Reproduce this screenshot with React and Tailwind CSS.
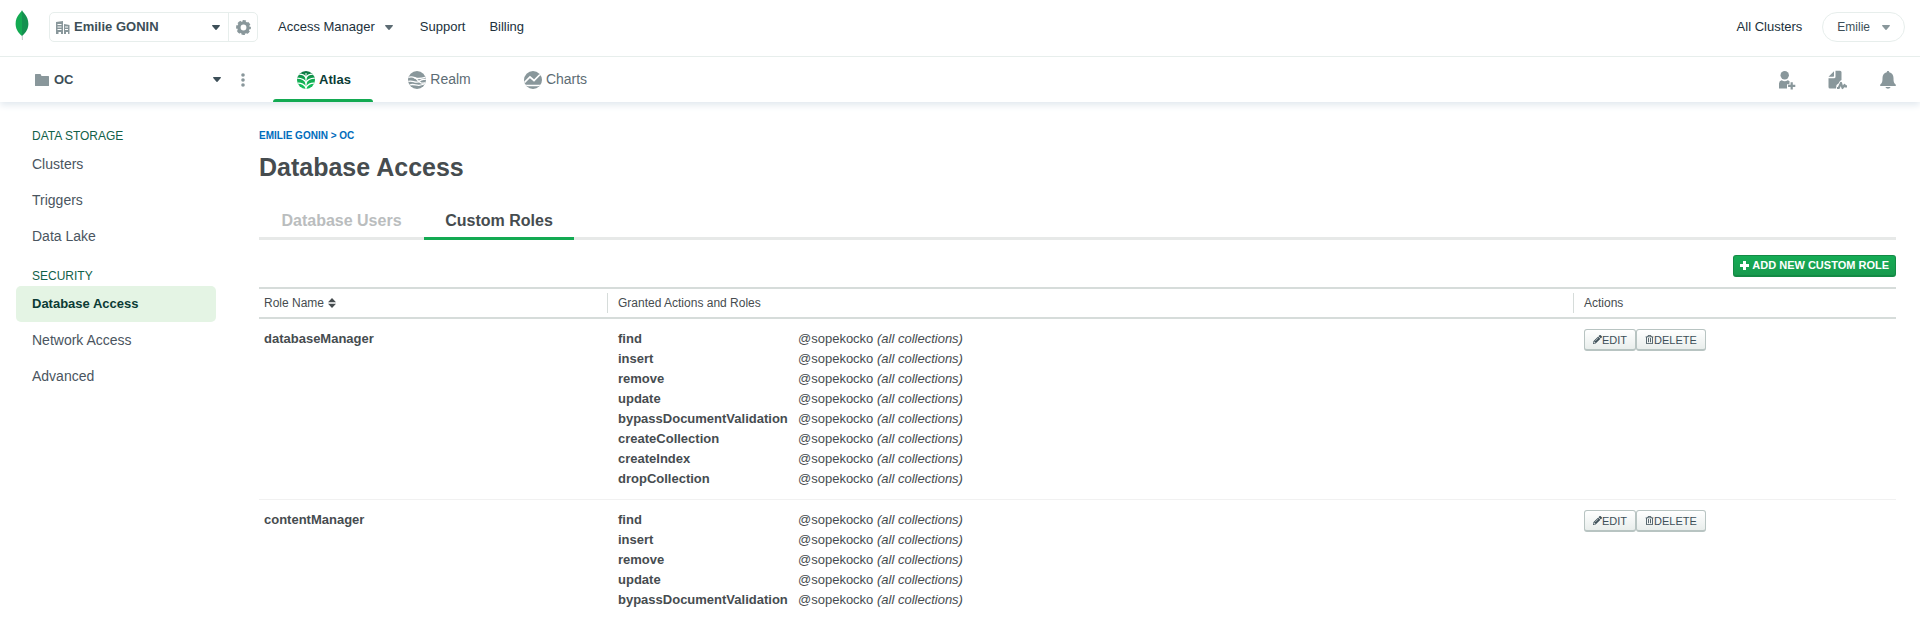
import { FaPencilAlt, FaRegTrashAlt } from "react-icons/fa";

const gray = "#89979b";

function Caret({ className = "" }) {
  return (
    <svg viewBox="0 0 8 5" className={`h-[5px] w-2 shrink-0 ${className}`} fill="currentColor" aria-hidden="true">
      <path d="M0.6 0h6.8c.5 0 .7.5.4.9L4.500 4.700c-.3.4-.7.4-1 0L.2.9C-.1.5.1 0 .6 0z" />
    </svg>
  );
}

function Leaf() {
  return (
    <svg viewBox="0 0 14 30" className="h-[30px] w-[14px]" aria-hidden="true">
      <path d="M6.700 24h.9l.2 6h-.9z" fill="#b8c4c2" />
      <path d="M7 0C6.600 2.500.6 5.500.6 14c0 6.500 4.700 10.500 6.400 12z" fill="#13aa52" />
      <path d="M7 0c.4 2.500 6.400 5.500 6.400 14 0 6.500-4.700 10.500-6.400 12z" fill="#149150" />
    </svg>
  );
}

function Building() {
  return (
    <svg viewBox="0 0 14 13" className="h-[13px] w-[14px] shrink-0" aria-hidden="true">
      <path
        fill={gray}
        fillRule="evenodd"
        d="M0 1l7-1v13H5v-2H2.500v2H0zM1.500 3v1h4V3zM1.500 5.500v1h4v-1zM1.500 8v1h4V8zM8 3l5.500 1v9H12v-2h-2v2H8zM9 5.500v1h3v-1zM9 8v1h3V8z"
      />
    </svg>
  );
}

function Gear() {
  return (
    <svg viewBox="0 0 16 16" className="size-[15px]" fill="none" aria-hidden="true">
      <circle cx="8" cy="8" r="4.900" stroke={gray} strokeWidth="3.600" />
      <circle cx="8" cy="8" r="6.900" stroke={gray} strokeWidth="2" strokeDasharray="3.600 1.820" strokeDashoffset="1.800" />
    </svg>
  );
}

function Folder() {
  return (
    <svg viewBox="0 0 14 12" className="h-3 w-[14px] shrink-0" fill={gray} aria-hidden="true">
      <path d="M.6 0H5.500l1 2h6.900a.6.6 0 0 1 .6.6v8.800a.6.6 0 0 1-.6.6H.6a.6.6 0 0 1-.6-.6V.6A.6.6 0 0 1 .6 0z" />
    </svg>
  );
}

function AtlasIcon() {
  return (
    <svg viewBox="0 0 18 18" className="size-[18px]" aria-hidden="true">
      <defs>
        <clipPath id="atlas-disc"><circle cx="9" cy="9" r="9" /></clipPath>
        <linearGradient id="atlas-fill" x1="0" y1="0" x2="0" y2="1">
          <stop offset="0" stopColor="#0b6d40" />
          <stop offset=".45" stopColor="#13aa52" />
          <stop offset="1" stopColor="#13c45c" />
        </linearGradient>
      </defs>
      <g clipPath="url(#atlas-disc)">
        <rect width="18" height="18" fill="url(#atlas-fill)" />
        <g fill="none" stroke="#fff" strokeWidth="1.300">
          <path d="M9 2v16" strokeWidth="1" />
          <path d="M2 3.200c3 0 6 1.300 7 3.800 1-2.500 4-3.800 7-3.800" />
          <path d="M-.5 7.200C4 7.200 8 9 9 12c1-3 5-4.800 9.500-4.800" />
          <path d="M0 12.200c4-.5 8 1.500 9 4.500 1-3 5-5 9-4.500" />
        </g>
      </g>
    </svg>
  );
}

function RealmIcon() {
  return (
    <svg viewBox="0 0 18 18" className="size-[18px]" aria-hidden="true">
      <defs><clipPath id="realm-disc"><circle cx="9" cy="9" r="9" /></clipPath></defs>
      <g clipPath="url(#realm-disc)">
        <rect width="18" height="18" fill={gray} />
        <g fill="none" stroke="#fff" strokeWidth="1.300">
          <path d="M0 6.500c3-1.200 5-.6 7 .3s6 1 11-.8" />
          <path d="M0 10.500c3-1.200 5 0 7 .5s4-.2 5-1.300c1.500-1.400 4-1 6-1.700" />
          <path d="M2 14c3-1.500 6 .5 9 .3s4-1.300 7-1.600" />
          <path d="M6 6.500c4 1 3 4 7 5.300 2 .5 3 .2 5 0" />
        </g>
      </g>
    </svg>
  );
}

function ChartsIcon() {
  return (
    <svg viewBox="0 0 18 18" className="size-[18px]" aria-hidden="true">
      <defs><clipPath id="charts-disc"><circle cx="9" cy="9" r="9" /></clipPath></defs>
      <g clipPath="url(#charts-disc)">
        <rect width="18" height="18" fill={gray} />
        <path d="M0 12l6-6 4 3.500L16 3.500" fill="none" stroke="#fff" strokeWidth="1.700" />
        <path d="M0 14.500h18" stroke="#fff" strokeWidth="1.300" />
      </g>
    </svg>
  );
}

function InviteIcon() {
  return (
    <svg viewBox="0 0 18 20" className="h-5 w-[18px]" fill={gray} aria-hidden="true">
      <circle cx="6.700" cy="5.200" r="4.200" />
      <path d="M1 18.500V13.500a3.500 3.500 0 0 1 2.700-3.200c1.800 1.200 4.200 1.200 6 0 1 .3 1.900 1 2.300 1.900h-.6v2H9v4.300z" />
      <path d="M12.600 12.300h2.200v2.500h2.500V17h-2.500v2.500h-2.200V17h-2.500v-2.200h2.500z" />
    </svg>
  );
}

function ActivityIcon() {
  return (
    <svg viewBox="0 0 20 20" className="size-5" fill={gray} aria-hidden="true">
      <path d="M.5 6.800L6 1.200V6a.8.8 0 0 1-.8.8z" />
      <path d="M7.500.8H12a1.500 1.500 0 0 1 1.500 1.500V10L12 11l-1.500 2.500L8.500 15 8 18.500H2A1.500 1.500 0 0 1 .5 17V8.300h5.500A1.500 1.500 0 0 0 7.500 6.800z" />
      <path d="M9 18h1.700l2.300-5 1.500 5 2-3 .8 1.300h1.700" fill="none" stroke={gray} strokeWidth="2.200" strokeLinejoin="round" />
    </svg>
  );
}

function BellIcon() {
  return (
    <svg viewBox="0 0 16 18" className="h-[18px] w-4" fill={gray} aria-hidden="true">
      <path d="M8 0c.8 0 1.200.5 1.200 1.300C12 2 13.500 4 13.500 7c0 4 .5 5 2.300 6.700V15H.2v-1.300C2 12 2.500 11 2.500 7c0-3 1.500-5 4.300-5.700C6.800.5 7.200 0 8 0zM5.500 16h5c-.5 2.300-4.500 2.300-5 0z" />
    </svg>
  );
}

function SortIcon() {
  return (
    <svg viewBox="0 0 8 10" className="h-[10px] w-2" fill="currentColor" aria-hidden="true">
      <path d="M4 0l4 4.300H0zM0 5.700h8L4 10z" />
    </svg>
  );
}

function PlusIcon() {
  return (
    <svg viewBox="0 0 9 9" className="size-[9px]" fill="currentColor" aria-hidden="true">
      <path d="M3 0h3v3h3v3H6v3H3V6H0V3h3z" />
    </svg>
  );
}

const base = ["find", "insert", "remove", "update", "bypassDocumentValidation"];
const roles = [
  { name: "databaseManager", actions: [...base, "createCollection", "createIndex", "dropCollection"] },
  { name: "contentManager", actions: base },
];

function SideLink({ children, active }) {
  return (
    <a
      href="#"
      aria-current={active ? "page" : undefined}
      className={`flex h-9 items-center rounded-[5px] px-4 leading-5 ${
        active ? "bg-[#e4f4e4] text-[13px] font-bold text-[#0b3b35]" : "text-[14px] text-[#4a5560]"
      }`}
    >
      {children}
    </a>
  );
}

function SmallButton({ icon, children }) {
  return (
    <button
      type="button"
      className="flex h-[22px] items-center rounded-[3px] border border-b-2 border-[#b8c4c2] bg-linear-to-b from-white to-[#e9eeec] px-2 text-[11px] leading-4 text-[#3d4f58]"
    >
      {icon}
      {children}
    </button>
  );
}

function RoleRow({ role }) {
  return (
    <tr className="border-b border-[#f1f1f1] align-top last:border-b-0">
      <td className="px-[5px] pt-[10px] text-[13px] leading-5 font-bold">{role.name}</td>
      <td className="px-[11px] py-[10px]">
        <dl className="grid grid-cols-[180px_1fr] text-[13px] leading-5">
          {role.actions.map((action) => (
            <div key={action} className="contents">
              <dt className="font-bold">{action}</dt>
              <dd>
                @sopekocko <em>(all collections)</em>
              </dd>
            </div>
          ))}
        </dl>
      </td>
      <td className="px-[11px] pt-[10px]">
        <div className="flex">
          <SmallButton icon={<FaPencilAlt className="size-[9px]" />}>EDIT</SmallButton>
          <SmallButton icon={<FaRegTrashAlt className="size-[9px]" />}>DELETE</SmallButton>
        </div>
      </td>
    </tr>
  );
}

export default function App() {
  return (
    <div className="min-h-screen bg-white font-['Liberation_Sans',Arial,sans-serif] text-[#464c4f]">
      <header className="shadow-[0_3px_7px_#e1e8ee]">
        <div className="flex h-[57px] items-center border-b border-[#e7eeec] px-[15px] pb-[2px] text-[13px] text-[#21313c]">
          <a href="#" aria-label="Home" className="mb-1"><Leaf /></a>
          <div className="ml-5 flex h-[30px] w-[209px] rounded-[5px] border border-[#e7eeec]">
            <button type="button" className="flex flex-1 items-center gap-1 border-r border-[#e7eeec] pr-2 pl-[6px] font-bold text-[#3d4f58]">
              <Building />
              <span>Emilie GONIN</span>
              <Caret className="ml-auto" />
            </button>
            <button type="button" aria-label="Organization settings" className="flex w-7 items-center justify-center">
              <Gear />
            </button>
          </div>
          <nav className="ml-5 flex items-center">
            <button type="button" className="flex items-center gap-[10px]">
              Access Manager <Caret className="text-[#5d6c74]" />
            </button>
            <a href="#" className="ml-[27px]">Support</a>
            <a href="#" className="ml-6">Billing</a>
          </nav>
          <a href="#" className="ml-auto">All Clusters</a>
          <button type="button" className="ml-5 flex h-[30px] items-center gap-3 rounded-full border border-[#e7eeec] px-[14px] text-[12px] text-[#3d4f58]">
            Emilie <Caret className="text-[#89979b]" />
          </button>
        </div>
        <div className="flex h-[45px] items-stretch">
          <div className="flex w-[273px] items-center pl-[35px]">
            <button type="button" className="flex w-[186px] items-center gap-[5px] text-[13px] font-bold text-[#3d4f58]">
              <Folder /> OC <Caret className="ml-auto" />
            </button>
            <button type="button" aria-label="Project options" className="ml-5">
              <svg viewBox="0 0 4 14" className="h-[14px] w-1" fill={gray} aria-hidden="true">
                <circle cx="2" cy="2" r="1.800" /><circle cx="2" cy="7" r="1.800" /><circle cx="2" cy="12" r="1.800" />
              </svg>
            </button>
          </div>
          <nav className="flex gap-[13px] text-[14px] text-[#5d6c74]">
            <a href="#" aria-current="page" className="relative flex w-[100px] items-center justify-center gap-1 pl-[2px] text-[13px] font-bold text-[#0b3b35]">
              <AtlasIcon /> Atlas
              <span className="absolute inset-x-0 bottom-0 h-[3px] rounded-t bg-[#13aa52]" />
            </a>
            <a href="#" className="flex w-[104px] items-center justify-center gap-1 pl-[3px]"><RealmIcon /> Realm</a>
            <a href="#" className="flex w-[102px] items-center justify-center gap-1 pl-[3px]"><ChartsIcon /> Charts</a>
          </nav>
          <div className="ml-auto flex items-center gap-8 pr-6">
            <button type="button" aria-label="Invite user"><InviteIcon /></button>
            <button type="button" aria-label="Activity feed"><ActivityIcon /></button>
            <button type="button" aria-label="Alerts"><BellIcon /></button>
          </div>
        </div>
      </header>

      <div className="flex pr-6">
        <nav className="w-[216px] shrink-0 pt-6 pl-4">
          <h2 className="px-4 text-[12px] leading-5 text-[#116149]">DATA STORAGE</h2>
          <SideLink>Clusters</SideLink>
          <SideLink>Triggers</SideLink>
          <SideLink>Data Lake</SideLink>
          <h2 className="mt-3 px-4 text-[12px] leading-5 text-[#116149]">SECURITY</h2>
          <SideLink active>Database Access</SideLink>
          <SideLink>Network Access</SideLink>
          <SideLink>Advanced</SideLink>
        </nav>

        <main className="ml-[43px] min-w-0 flex-1 pt-6">
          <p className="text-[10px] leading-5 font-bold text-[#006cbc]">
            <a href="#">EMILIE GONIN</a> &gt; <a href="#">OC</a>
          </p>
          <h1 className="mt-[5px] text-[25px] leading-8 font-bold">Database Access</h1>
          <div role="tablist" className="mt-[17px] flex h-10 border-b-[3px] border-[#e7e9e8] text-[16px] font-bold">
            <button role="tab" type="button" aria-selected="false" className="w-[165px] pt-1 text-[#babdbe]">Database Users</button>
            <button role="tab" type="button" aria-selected="true" className="-mb-[3px] w-[150px] border-b-[3px] border-[#13aa52] pt-1">Custom Roles</button>
          </div>
          <div className="mt-[15px] flex justify-end">
            <button type="button" className="flex h-[22px] items-center gap-[3px] rounded-[3px] border border-b-2 border-[#138a45] bg-linear-to-b from-[#15ac55] to-[#189a4e] px-[6px] text-[11px] font-bold text-white">
              <PlusIcon /> ADD NEW CUSTOM ROLE
            </button>
          </div>
          <table className="mt-[10px] w-full table-fixed border-collapse text-left">
            <colgroup>
              <col className="w-[348px]" />
              <col />
              <col className="w-[323px]" />
            </colgroup>
            <thead>
              <tr className="h-[30px] border-y-2 border-[#d6dcda] text-[12px] leading-5">
                <th className="px-[5px] py-0 font-normal">
                  <button type="button" className="flex items-center gap-1">Role Name <SortIcon /></button>
                </th>
                <th className="p-0 font-normal"><div className="border-l border-[#d6dcda] px-[10px]">Granted Actions and Roles</div></th>
                <th className="p-0 font-normal"><div className="border-l border-[#d6dcda] px-[10px]">Actions</div></th>
              </tr>
            </thead>
            <tbody>
              {roles.map((role) => <RoleRow key={role.name} role={role} />)}
            </tbody>
          </table>
        </main>
      </div>
    </div>
  );
}
